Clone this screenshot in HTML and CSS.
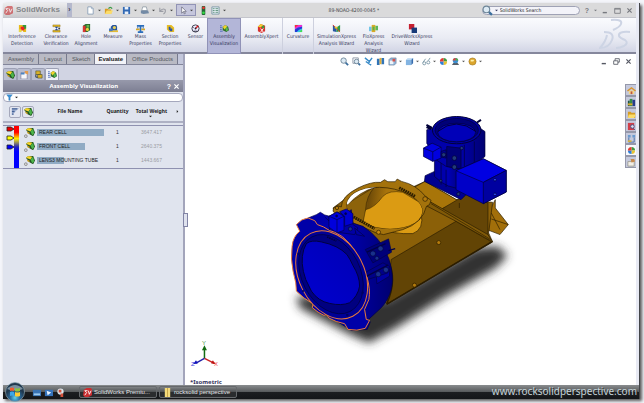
FILE: index.html
```html
<!DOCTYPE html>
<html lang="en">
<head>
<meta charset="utf-8">
<title>SolidWorks</title>
<link rel="stylesheet" href="styles.css">
</head>
<body>
<svg class="defs" aria-hidden="true">
  <defs>
    <symbol id="part" viewBox="0 0 10 10"><path d="M0 3 3 1l5 0 2 5-2 4-4-2z" fill="#252"/><path d="M0 3 3 1l4 1-2 3z" fill="#f4d22c"/><path d="M5 5 8 2l1 5-2 2z" fill="#4cb54a"/><path d="M1 5l3 1v2L2 7z" fill="#c79b1c"/></symbol>
    <symbol id="interf" viewBox="0 0 10 10"><path d="M1 1h4l1 2 3-2v8H6L5 7 1 9z" fill="#e8bb1c"/><path d="M5 1h4v4L6 6z" fill="#2f9a3a"/><path d="M3 3h4v4H3z" fill="#e22"/><path d="M1 6h3v3H1z" fill="#e9d94a"/></symbol>
    <symbol id="clear" viewBox="0 0 10 10"><path d="M1 1h8v2H1zM1 7h8v2H1z" fill="#e5bb20" stroke="#8b6a10" stroke-width=".5"/><path d="M3 3h4L5 5zM3 7h4L5 5z" fill="#234a9c"/><path d="M7 4h2v2H7z" fill="#345"/></symbol>
    <symbol id="hole" viewBox="0 0 10 10"><path d="M1 2 4 0h5v7L6 9H1z" fill="#286b2e"/><path d="M1 2h3v7H1z" fill="#d33"/><path d="M5 1h3v3H5z" fill="#67b54c"/><circle cx="6" cy="6" r="1.700" fill="#f0d23d"/></symbol>
    <symbol id="measure" viewBox="0 0 10 10"><path d="M0 7h10v2H0z" fill="#e6bd31"/><path d="M2 7V3l2-2h4l1 2v4z" fill="#27549e"/><circle cx="6" cy="4" r="1.800" fill="#e6d05a"/><path d="M0 5h4v3H0z" fill="#497bbd"/></symbol>
    <symbol id="mass" viewBox="0 0 10 10"><path d="M1 1h8v2H1zM4 1h2v8H4zM2 8h6v2H2z" fill="#2a6dbb"/><path d="M0 5h4v2H0zM6 5h4v2H6z" fill="#d5a82a"/><path d="M2 3v2M8 3v2" stroke="#36a"/></symbol>
    <symbol id="section" viewBox="0 0 10 10"><path d="M1 1h5l3 3v5H4L1 6z" fill="#e7bd24"/><path d="M3 3h2v2h2v3H5L3 6z" fill="#2b54a2"/></symbol>
    <symbol id="sensor" viewBox="0 0 10 10"><circle cx="5" cy="5" r="4" fill="#eef" stroke="#334" stroke-width="1"/><path d="M5 5 8 2" stroke="#d22" stroke-width="1.500"/><path d="M3 8h4M2 4h1" stroke="#334"/><circle cx="5" cy="5" r="1" fill="#223"/></symbol>
    <symbol id="asmvis" viewBox="0 0 10 10"><path d="M0 2h2M0 4h2M0 6h2M0 8h3" stroke="#4a69b8"/><path d="M3 3 6 1l3 2 1 4-3 2-4-2z" fill="#2f6d30"/><path d="M3 3l3-2 2 2-3 3z" fill="#f0d22b"/><path d="M6 5l2-2 1 4-2 1z" fill="#57bb4e"/></symbol>
    <symbol id="axpert" viewBox="0 0 10 10"><path d="M1 3 4 0l5 2v6L5 10 1 8z" fill="#d8332f"/><path d="M1 3 4 0l3 1-3 3z" fill="#f1d431"/><path d="M5 3 8 1v4H6z" fill="#3ca23e"/><path d="m4 5 3 4M7 5 4 9" stroke="#fff"/></symbol>
    <symbol id="curv" viewBox="0 0 10 10"><path d="M1 1h8v8H1z" fill="#31c6e8"/><path d="M1 1h8v2Q4 3 1 6z" fill="#f22ad0"/><path d="M1 1h4L1 4z" fill="#e33"/><path d="M1 6Q4 3 9 3v2Q5 6 3 9H1z" fill="#2639d8"/><path d="M6 9Q7 7 9 6v3z" fill="#42e053"/></symbol>
    <symbol id="sim" viewBox="0 0 10 10"><path d="M1 1l4 3v5L1 8z" fill="#2755a3"/><path d="m9 1-4 3v5l4-1z" fill="#2d9947"/><path d="M1 1 9 9" stroke="#e63828"/><path d="M3 3h3v2H3z" fill="#f0ca32"/></symbol>
    <symbol id="flo" viewBox="0 0 10 10"><path d="M0 3h3v5H0z" fill="#72c5e8"/><path d="M7 2h3v5H7z" fill="#5bb85c"/><path d="M3 1h4v8H3z" fill="#d9ab29"/><path d="M4 3h2v4H4z" fill="#55b74c"/></symbol>
    <symbol id="drive" viewBox="0 0 10 10"><path d="M1 0h6v6H1z" fill="#c51f30"/><path d="M4 4h6v6H4z" fill="#173a78"/></symbol>
    <symbol id="ball" viewBox="0 0 10 10"><path d="M5 5V1a4 4 0 0 1 4 4z" fill="#3f9b42"/><path d="M5 5h4a4 4 0 0 1-4 4z" fill="#e9c332"/><path d="M5 5v4a4 4 0 0 1-4-4z" fill="#2b7fda"/><path d="M5 5H1a4 4 0 0 1 4-4z" fill="#e23b32"/></symbol>
    <symbol id="lens" viewBox="0 0 10 10"><path d="m6 6 3 3" stroke="#3b6f9e" stroke-width="2"/><circle cx="4" cy="4" r="3" fill="#dceaf4" stroke="#6e8698"/></symbol>
    <symbol id="cube" viewBox="0 0 10 10"><path d="M1 3 3 1h6L7 3z" fill="#c6dff6"/><path d="M1 3h6v6H1z" fill="#83b4e2"/><path d="M7 3l2-2v6L7 9z" fill="#376daf"/></symbol>
    <symbol id="folder" viewBox="0 0 10 10"><path d="M1 2h3l1 1h4v6H1z" fill="#d79d25"/><path d="M2 5h8L8 9H1z" fill="#fbdc6a"/></symbol>
    <symbol id="page" viewBox="0 0 10 10"><path d="M2 1h4l2 2v6H2z" fill="#fff" stroke="#7891ae" stroke-width=".8"/><path d="M6 1v2h2" fill="none" stroke="#7891ae" stroke-width=".6"/></symbol>
    <symbol id="sw" viewBox="0 0 10 10"><path d="M1 2 4 0h5l1 2v6L6 10H2L0 8z" fill="#c92d30"/><path d="M5 3H2l2 2-2 3M6 3l1 4 2-4" fill="none" stroke="#fff"/></symbol>
    <symbol id="win" viewBox="0 0 10 10"><path d="M1 8h6" stroke="currentColor" stroke-width="2"/></symbol>
    <symbol id="close" viewBox="0 0 10 10"><path d="m2 2 6 6M8 2 2 8" stroke="currentColor" stroke-width="1.700"/></symbol>
    <symbol id="max" viewBox="0 0 10 10"><path d="M1 2h8v7H1zM1 3h8" fill="none" stroke="currentColor" stroke-width="1.200"/></symbol>
    <symbol id="restore" viewBox="0 0 10 10"><path d="M3 4V1h6v5H7M1 4h6v5H1z" fill="none" stroke="currentColor" stroke-width="1.200"/></symbol>
    <symbol id="caret" viewBox="0 0 4 4"><path d="M0 1h4L2 3z" fill="currentColor"/></symbol>
  </defs>
</svg>

<div class="window">
  <header class="titlebar">
    <div class="brand"><svg class="ico"><use href="#sw"/></svg><b>SolidWorks</b><i class="flyout">›</i></div>
    <div class="quick">
      <button aria-label="New"><svg class="ico"><use href="#page"/></svg><svg class="car"><use href="#caret"/></svg></button>
      <button aria-label="Open"><svg class="ico" viewBox="0 0 10 10"><path d="M1 3h3l1 1h3v5H1z" fill="#d79d25"/><path d="M3 5h7L8 9H1z" fill="#fbdc6a"/><path d="M5 3q2-3 4 0" fill="none" stroke="#3a9a44" stroke-width="1.500"/></svg><svg class="car"><use href="#caret"/></svg></button>
      <button aria-label="Save"><svg class="ico" viewBox="0 0 10 10"><path d="M1 1h8v8H1z" fill="#3269b4"/><path d="M3 1h4v3H3zM3 6h4v3H3z" fill="#e9f1fb"/></svg><svg class="car"><use href="#caret"/></svg></button>
      <button aria-label="Print"><svg class="ico" viewBox="0 0 10 10"><path d="M3 1h4l1 4H2z" fill="#fff" stroke="#678" stroke-width=".6"/><path d="M1 5h8l1 3-6 1-3-1z" fill="#738aa5"/></svg><svg class="car"><use href="#caret"/></svg></button>
      <button aria-label="Undo"><svg class="ico" viewBox="0 0 10 10"><path d="M2 2v4h4M2 6q3-4 6-2 1 3-2 5" fill="none" stroke="#9b9da5" stroke-width="1.200"/></svg><svg class="car"><use href="#caret"/></svg></button>
      <button class="picked" aria-label="Select"><svg class="ico" viewBox="0 0 10 10"><path d="M3 1v7l2-2 1 3 1-1-1-2h2z" fill="#fff" stroke="#556" stroke-width=".7"/></svg><svg class="car"><use href="#caret"/></svg></button>
      <button aria-label="Rebuild"><svg class="ico" viewBox="0 0 10 10"><rect x="3" width="4" height="10" rx="1" fill="#263"/><circle cx="5" cy="2" r="1.500" fill="#e33"/><circle cx="5" cy="7.500" r="1.500" fill="#3d4"/></svg></button>
      <button aria-label="Options"><svg class="ico" viewBox="0 0 10 10"><path d="M1 1h8v8H1z" fill="#e7f0f5" stroke="#7b97a5"/><path d="M2 3h2M5 3h3M2 5h2M5 5h3M2 7h2M5 7h3" stroke="#5a8e7b"/></svg><svg class="car"><use href="#caret"/></svg></button>
    </div>
    <div class="doc">89-NOAO-4200-0045 *</div>
    <label class="search"><svg class="lens"><use href="#lens"/></svg><svg class="car"><use href="#caret"/></svg><input type="text" value="SolidWorks Search" aria-label="Search"></label>
    <div class="winbtns">
      <button aria-label="Help"><b>?</b></button><svg class="car"><use href="#caret"/></svg>
      <button aria-label="Minimize"><svg class="wi"><use href="#win"/></svg></button>
      <button aria-label="Maximize"><svg class="wi"><use href="#max"/></svg></button>
      <button aria-label="Close"><svg class="wi"><use href="#close"/></svg></button>
    </div>
  </header>

  <nav class="ribbon" aria-label="Evaluate tools">
    <button><svg class="ico"><use href="#interf"/></svg>Interference<br>Detection</button>
    <button><svg class="ico"><use href="#clear"/></svg>Clearance<br>Verification</button>
    <button><svg class="ico"><use href="#hole"/></svg>Hole<br>Alignment</button>
    <button><svg class="ico"><use href="#measure"/></svg>Measure</button>
    <button><svg class="ico"><use href="#mass"/></svg>Mass<br>Properties</button>
    <button><svg class="ico"><use href="#section"/></svg>Section<br>Properties</button>
    <button><svg class="ico"><use href="#sensor"/></svg>Sensor</button>
    <button class="active"><svg class="ico"><use href="#asmvis"/></svg>Assembly<br>Visualization</button>
    <button class="ruled"><svg class="ico"><use href="#axpert"/></svg>AssemblyXpert</button>
    <button class="ruled"><svg class="ico"><use href="#curv"/></svg>Curvature</button>
    <button><svg class="ico"><use href="#sim"/></svg>SimulationXpress<br>Analysis Wizard</button>
    <button><svg class="ico"><use href="#flo"/></svg>FloXpress<br>Analysis<br>Wizard</button>
    <button><svg class="ico"><use href="#drive"/></svg>DriveWorksXpress<br>Wizard</button>
    <svg class="ds" viewBox="0 0 32 32"><g fill="none" stroke="#cdd4e4" stroke-width="2"><path d="M12 2q12-1 10 4-1 3-8 6"/><path d="M5 14q11 0 8 8-3 8-12 8 6-7 7-13"/><path d="M31 14q-12-1-11 4 1 2 6 4 4 3-1 6-4 2-8 2"/></g></svg>
  </nav>

  <main class="work">
    <aside class="side">
      <div class="cmdtabs">
        <button>Assembly</button><button>Layout</button><button>Sketch</button><button class="on">Evaluate</button><button>Office Products</button>
      </div>
      <div class="paneltabs">
        <button aria-label="Feature tree"><svg class="ico"><use href="#part"/></svg></button>
        <button aria-label="Properties"><svg class="ico" viewBox="0 0 10 10"><path d="M1 3h7v7H1z" fill="#f6f6fa" stroke="#779" stroke-width=".7"/><path d="M5 1h4v4L6 4z" fill="#e39a4e"/><path d="M1 3h4v2H1z" fill="#4b85c4"/></svg></button>
        <button aria-label="Configurations"><svg class="ico" viewBox="0 0 10 10"><path d="M2 1h5v4H2zM4 5h5v4H4z" fill="#d8b126" stroke="#553" stroke-width=".7"/><path d="M2 5v3h2" stroke="#234" fill="none"/></svg></button>
        <button class="on" aria-label="Assembly Visualization"><svg class="ico"><use href="#asmvis"/></svg></button>
      </div>
      <div class="panelhead"><h1>Assembly Visualization</h1><button aria-label="Help">?</button><button aria-label="Close"><svg class="wi"><use href="#close"/></svg></button></div>
      <div class="filter"><svg class="ico" viewBox="0 0 10 10"><path d="M1 1h8L6 5v4H4V5z" fill="#3b94d8" stroke="#1e64a8" stroke-width=".5"/></svg><svg class="car"><use href="#caret"/></svg></div>
      <table class="parts">
        <colgroup><col class="c-key"><col class="c-ico"><col><col class="c-qty"><col class="c-wt"><col class="c-more"></colgroup>
        <thead>
          <tr>
            <th colspan="2"><div class="views"><button aria-label="Flat view"><svg class="ico" viewBox="0 0 10 10"><path d="M1 1h8L1 9z" fill="#a8b8d6"/><path d="M1 2h6M1 5h3M1 8h2" stroke="#456296" stroke-width="1.400"/></svg></button><button aria-label="Nested view"><svg class="ico"><use href="#part"/></svg></button></div></th>
            <th>File Name</th><th>Quantity</th><th class="sorted">Total Weight<svg class="car"><use href="#caret"/></svg></th><th><svg class="car more"><use href="#caret"/></svg></th>
          </tr>
        </thead>
        <tbody>
          <tr>
            <td rowspan="3" class="key"><svg viewBox="0 0 18 42"><defs><linearGradient id="scale" x2="0" y2="1"><stop offset=".15" stop-color="#f00"/><stop offset=".3" stop-color="#fe0"/><stop offset=".5" stop-color="#22b"/><stop offset=".6" stop-color="#00f"/></linearGradient></defs><path d="M11 0h5v42h-5z" fill="url(#scale)"/><g stroke="#222" stroke-width=".8"><path d="M4 1h4l3 2-3 2H4z" fill="#e00"/><path d="M4 10h4l3 2-3 2H4z" fill="#ff0"/><path d="M4 19h4l3 2-3 2H4z" fill="#00f"/></g></svg></td>
            <td><svg class="row-ico" viewBox="0 0 12 12"><use href="#part" x="2" width="10" height="10"/><circle cx="2" cy="10" r="1.500" fill="#ddd" stroke="#777" stroke-width=".8"/></svg></td><td><div class="name"><span class="bar" style="width:100%"></span>REAR CELL</div></td><td class="n">1</td><td class="w">3647.417</td><td></td>
          </tr>
          <tr><td><svg class="row-ico" viewBox="0 0 12 12"><use href="#part" x="2" width="10" height="10"/><circle cx="2" cy="10" r="1.500" fill="#ddd" stroke="#777" stroke-width=".8"/></svg></td><td><div class="name"><span class="bar" style="width:72%"></span>FRONT CELL</div></td><td class="n">1</td><td class="w">2640.375</td><td></td></tr>
          <tr><td><svg class="row-ico" viewBox="0 0 12 12"><use href="#part" x="2" width="10" height="10"/><circle cx="2" cy="10" r="1.500" fill="#ddd" stroke="#777" stroke-width=".8"/></svg></td><td><div class="name"><span class="bar" style="width:40%"></span>LENS3 MOUNTING TUBE</div></td><td class="n">1</td><td class="w">1443.667</td><td></td></tr>
        </tbody>
      </table>
    </aside>
    <div class="splitter"><i></i></div>

    <section class="view" aria-label="Model view">
      <svg class="model" viewBox="185 54 452 331" preserveAspectRatio="xMinYMin meet">
        <defs>
          <filter id="soft" x="-20%" y="-20%" width="140%" height="140%"><feGaussianBlur stdDeviation="14"/></filter>
          <linearGradient id="face" x1="0" y1="1" x2="1" y2="0"><stop stop-color="#0000d0"/><stop offset="1" stop-color="#0000b4"/></linearGradient>
          <linearGradient id="cyl"><stop stop-color="#0000a0"/><stop offset=".5" stop-color="#0000b4"/><stop offset="1" stop-color="#000070"/></linearGradient>
          <linearGradient id="bore"><stop stop-color="#d6970f"/><stop offset=".28" stop-color="#6f4b08"/><stop offset=".5" stop-color="#a8740c"/></linearGradient>
          <clipPath id="hole-clip"><ellipse cx="315" cy="325" rx="114" ry="61" transform="rotate(7 315 325)"/></clipPath>
        </defs>
        <g transform="translate(280 100) scale(.3333)" stroke-linejoin="round">
          <path d="M50 590 320 600 590 445 655 440 685 468 650 505 500 590 350 685 268 730 210 705 60 625z" fill="#333" filter="url(#soft)"/>
          <g stroke="#2b1d00" stroke-width="2">
            <path d="M632 330 648 300V325L687 375 662 405 628 392z" fill="#a26f0a"/>
            <path d="M636 358 687 375M636 340 662 390" fill="none"/>
            <path d="M437 245 530 300 640 308 628 400 640 427 322 615 200 400 160 325 200 295 300 250 400 262z" fill="#8b6008"/>
            <path d="M400 265 437 245 540 305 487 328 440 300z" fill="#a87509"/>
            <path d="M487 328 560 285 626 310V405L630 415z" fill="#644506"/>
            <path d="M335 480 530 365 637 427 322 614z" fill="#624405"/>
            <path d="M440 318 530 365 640 427 626 405 450 305z" fill="#805907"/>
            <path d="M455 312 634 420M540 325V310" fill="none"/>
            <path d="M425 340Q435 390 400 402 340 405 300 385L420 360z" fill="#db9b13"/>
            <path d="M322 614 637 427" stroke-width="4"/>
            <path d="M162 325 172 318 185 322Q185 290 235 265 275 245 303 248L315 240 325 246 347 246 353 238 366 245Q410 255 438 290L455 302 450 315 441 320Q430 370 370 390L312 405 290 400 175 350 160 335z" fill="#a3720c"/>
            <ellipse cx="315" cy="325" rx="114" ry="61" transform="rotate(7 315 325)" fill="url(#bore)"/>
            <g clip-path="url(#hole-clip)" stroke-width="1.500">
              <path d="M250 345 258 330Q285 325 310 290 330 270 370 278L440 320 425 400 250 385z" fill="#db9b13"/>
              <path d="M190 320 285 262Q260 290 258 330L250 370 190 360z" fill="#8d630a"/>
              <path d="M195 315Q225 255 290 262 240 275 205 315z" fill="#fff"/>
            </g>
            <path d="M359 264 407 290M222 352 285 387" stroke-width="9" stroke-dasharray="5 2"/>
            <circle cx="478" cy="429" r="6" fill="#b57b0b"/><circle cx="405" cy="557" r="6" fill="#b57b0b"/>
            <circle cx="172" cy="325" r="5" fill="#b57b0b"/><circle cx="297" cy="398" r="6" fill="#c9890c"/><circle cx="437" cy="298" r="7" fill="#b57b0b"/>
            <path d="M325 480Q355 540 322 612" fill="none" stroke-width="4"/>
          </g>

          <g stroke="#000038" stroke-width="2">
            <path d="M437 228 465 215 530 250 560 285 545 300 435 245z" fill="#000090"/>
            <path d="M465 160H550V265Q505 270 465 230z" fill="url(#cyl)"/>
            <path d="M485 180V255M500 210V262" fill="none"/>
            <path d="M442 90 460 85 602 85 617 95V170L585 195 545 208 500 200 470 180 442 130z" fill="url(#cyl)"/>
            <path d="M502 140 545 145V208L502 200zM555 135V200M585 125V190" fill="#000078"/>
            <ellipse cx="532" cy="91" rx="73" ry="41" fill="#0000a0" stroke-width="3"/>
            <ellipse cx="532" cy="91" rx="65" ry="35" fill="#000078"/>
            <ellipse cx="532" cy="98" rx="57" ry="28" fill="#0000b8"/>
            <path d="M475 95Q530 50 590 95" fill="none" stroke-width="3"/>
            <path d="M441 75 458 84M593 68 605 60M441 82 455 88" stroke-width="6"/>
            <path d="M432 145 458 130 485 142V175L460 185 432 170z" fill="#0000e0"/>
            <path d="M432 145 460 156 485 142M460 156V185" fill="none"/>
            <path d="M485 155 500 150V175L485 172z" fill="#000090"/>
            <g fill="#223a78"><circle cx="525" cy="175" r="7"/><circle cx="525" cy="202" r="7"/><circle cx="493" cy="165" r="6"/><circle cx="547" cy="145" r="5"/><circle cx="484" cy="243" r="4"/><circle cx="537" cy="283" r="5"/></g>
            <path d="M530 213 612 177 681 212V277L612 312 530 270z" fill="#0000c8"/>
            <path d="M530 213 612 177 681 212 612 248z" fill="#0000e2"/>
            <path d="M612 248 681 212V277L612 312z" fill="#0000a0"/>
            <circle cx="647" cy="240" r="4" fill="#3048ff"/><circle cx="647" cy="284" r="4" fill="#3048ff"/>
          </g>

          <g stroke="#000045" stroke-width="2">
            <path d="M85 355 110 345 122 338 135 346 150 350 250 380Q305 415 328 478 345 530 335 570 325 605 305 625L267 660 272 668 263 690 215 693 100 620 38 500 45 425z" fill="url(#cyl)"/>
            <path d="M135 352 160 375 240 400 225 385" fill="none"/>
            <path d="M148 350 172 337 195 345 215 330 220 375 235 385 225 405 150 395z" fill="#0000a4"/>
            <path d="M148 350 172 337 193 350V392L172 400 148 383z" fill="#0000dc"/><path d="M148 350 172 360 193 350M172 360V400" fill="none"/>
            <path d="M180 336 200 328 220 342V372L195 380V350z" fill="#0000d2"/>
            <circle cx="171" cy="349" r="3" fill="#000050"/><circle cx="198" cy="342" r="3" fill="#000050"/>
            <path d="M225 385 255 410 230 405zM290 525 330 510V530L292 553z" fill="#0000a2"/>
            <path d="M257 450 327 418 336 458 280 490z" fill="#000078"/>
            <path d="M255 520 310 490 330 500 325 520 265 540z" fill="#000088"/>
            <path d="M327 453 347 447M262 458 318 432M262 530 325 497" stroke-width="4"/>
            <g fill="#18308a"><circle cx="280" cy="462" r="8"/><circle cx="303" cy="447" r="8"/><circle cx="296" cy="524" r="8"/><circle cx="319" cy="511" r="8"/><circle cx="292" cy="476" r="6"/><circle cx="212" cy="388" r="6"/></g>
          </g>
          <path d="M50 375Q65 357 85 355L105 363 113 375Q132 380 150 393L165 398Q190 408 210 432 235 462 248 500L248 520 262 532Q273 570 268 600L255 630 260 660 270 663 257 687Q232 696 205 690L195 673Q168 668 148 656L140 645 133 648Q115 640 98 625L100 613Q72 598 50 575L48 550 40 515Q32 480 37 440 40 410 60 395z" fill="#0000a8" stroke="#e87a3a" stroke-width="3"/>
          <ellipse cx="156" cy="526" rx="98" ry="140" transform="rotate(-27 156 526)" fill="#000096" stroke="#e87a3a" stroke-width="3"/>
          <ellipse cx="154" cy="524" rx="88" ry="126" transform="rotate(-27 154 524)" fill="#000080" stroke="#000040" stroke-width="2"/>
          <path d="M80 432Q95 420 125 427 175 437 202 465 212 480 220 498 240 530 240 560 235 590 210 610 185 620 150 612 115 605 95 575L78 540Q60 490 72 450z" fill="url(#face)" stroke="#000040" stroke-width="3"/>
          <path d="M142 412 170 424" stroke="#000040" stroke-width="5" stroke-dasharray="5 2"/>
          <g fill="#000060"><circle cx="57" cy="463" r="4"/><circle cx="203" cy="647" r="4"/><circle cx="249" cy="580" r="4"/><circle cx="70" cy="575" r="3"/></g>
        </g>
        <g fill="none" stroke-width="1.500">
          <path d="M204.500 359v-10" stroke="#126b12"/><path d="m204.500 359 10 5" stroke="#c22"/><path d="m204.500 359-9 5" stroke="#22a"/>
        </g>
        <path d="m202 351 2.500-5 2.500 5z" fill="#126b12"/><path d="m211 364 4.500 1-2.500-4z" fill="#b11"/><path d="m198 364-5 1 3-4z" fill="#11b"/>
        <g class="axis"><text x="202" y="346" fill="#4a9a4a">Y</text><text x="214" y="367" fill="#e44">X</text><text x="191" y="367" fill="#44d">Z</text></g>
        <text x="190" y="385" class="orient">*Isometric</text>
      </svg>
      <div class="hud">
        <button aria-label="Zoom to fit"><svg class="ico"><use href="#lens"/></svg></button>
        <button aria-label="Zoom to area"><svg class="ico" viewBox="0 0 10 10"><path d="M1 1h6v6H1z" fill="none" stroke="#8b95a5"/><path d="m7 7 2 2" stroke="#3b6f9e" stroke-width="2"/><circle cx="5" cy="5" r="2.500" fill="#dceaf4" stroke="#6e8698"/></svg></button>
        <button aria-label="Previous view"><svg class="ico" viewBox="0 0 10 10"><path d="M1 1l5 4 3-4M2 5l6 4M6 5l-1 3" stroke="#398bc8" stroke-width="1.600" fill="none"/></svg></button>
        <button aria-label="Section view"><svg class="ico" viewBox="0 0 10 10"><path d="M1 2h3v7H1zM6 1h3v7H6z" fill="#3174b8"/><path d="M4 1h2v7H4z" fill="#e3ae35"/></svg></button>
        <button aria-label="View orientation"><svg class="ico" viewBox="0 0 10 10"><path d="M1 3 3 1h6v6L7 9H1z" fill="#8fb4d8" stroke="#57728f" stroke-width=".6"/><path d="M2 4h4v4H2z" fill="#eef4fa"/><path d="M5 2h3v3H5z" fill="#d8534a"/></svg><svg class="car"><use href="#caret"/></svg></button>
        <button aria-label="Display style"><svg class="ico"><use href="#cube"/></svg><svg class="car"><use href="#caret"/></svg></button>
        <button aria-label="Hide or show"><svg class="ico" viewBox="0 0 10 10"><g fill="none" stroke="#7895a5"><circle cx="2.500" cy="7" r="1.700"/><circle cx="7" cy="6" r="1.700"/><path d="M1 6 4 2M7 4l2-3"/></g></svg><svg class="car"><use href="#caret"/></svg></button>
        <button aria-label="Appearance"><svg class="ico"><use href="#ball"/></svg></button>
        <button aria-label="Scene"><svg class="ico" viewBox="0 0 10 10"><path d="M1 9 3 6h4l2 3z" fill="#56606a"/><circle cx="5" cy="4" r="3" fill="#3c90d5"/><path d="M5 1a3 3 0 0 1 3 3H5z" fill="#58aa45"/><path d="M2 4a3 3 0 0 1 3-3v3z" fill="#df4439"/></svg><svg class="car"><use href="#caret"/></svg></button>
        <button aria-label="View settings"><svg class="ico" viewBox="0 0 10 10"><circle cx="5" cy="5" r="4" fill="#dba52c" stroke="#9b721c" stroke-width=".6"/><path d="M3 3h4l-1 2H3z" fill="#fff0a5"/></svg><svg class="car"><use href="#caret"/></svg></button>
      </div>
      <div class="mdi">
        <button aria-label="Minimize document"><svg class="wi"><use href="#win"/></svg></button>
        <button aria-label="Restore document"><svg class="wi"><use href="#restore"/></svg></button>
        <button aria-label="Close document"><svg class="wi"><use href="#close"/></svg></button>
      </div>
      <div class="taskpane">
        <button aria-label="Resources"><svg class="ico" viewBox="0 0 10 10"><path d="M2 5h6v4H2z" fill="#f5d789"/><path d="M0 5 5 1l5 4-1 1-4-3-4 3z" fill="#d9942d"/><path d="M4 6h2v3H4z" fill="#b54"/></svg></button>
        <button aria-label="Design library"><svg class="ico" viewBox="0 0 10 10"><path d="M1 3h2v6H1z" fill="#254"/><path d="M3 1h3v8H3z" fill="#368b48"/><path d="M6 2h3v7H6z" fill="#263b8b"/><path d="M1 6h5v2H1z" fill="#d8aa27"/></svg></button>
        <button aria-label="File explorer"><svg class="ico"><use href="#folder"/></svg></button>
        <button aria-label="Search"><svg class="ico" viewBox="0 0 10 10"><path d="M1 1h7v8H1z" fill="#d13e48"/><circle cx="6" cy="5" r="2" fill="#dde" stroke="#458"/><path d="m7 7 2 2" stroke="#458"/></svg></button>
        <button aria-label="View palette"><svg class="ico" viewBox="0 0 10 10"><path d="M1 1h3v3H1zM6 1h3v3H6z" fill="#6a9bd0"/><path d="M2 4v5h6V4" stroke="#456ca5" fill="none"/><path d="M1 7h4v2H1z" fill="#d4b241"/></svg></button>
        <button class="on" aria-label="Appearances"><svg class="ico"><use href="#ball"/></svg></button>
        <button aria-label="Custom properties"><svg class="ico" viewBox="0 0 10 10"><path d="M1 4h7v5H1z" fill="#f2eee6" stroke="#887" stroke-width=".7"/><path d="M4 1h4l1 3-4 1z" fill="#c8894c"/></svg></button>
      </div>
    </section>
  </main>

  <footer class="taskbar">
    <button class="start" aria-label="Start"><svg viewBox="0 0 20 20"><defs><radialGradient id="orb" cy=".8"><stop stop-color="#5fd2ee"/><stop offset=".5" stop-color="#2a6a9c"/><stop offset="1" stop-color="#20384e"/></radialGradient></defs><circle cx="10" cy="10" r="9.500" fill="url(#orb)" stroke="#8ba3b0" stroke-width=".7"/><path d="M2 7Q10-1 18 7 10 10 2 7z" fill="#b5c9d5" opacity=".6"/><path d="M5 6q2-1 4 0v3q-2-1-4 0z" fill="#ed5b2d"/><path d="M10 6q2 1 5 0v3q-3 1-5 0z" fill="#8ac53e"/><path d="M5 10q2-1 4 0v4q-2-1-4 0z" fill="#3ba6e8"/><path d="M10 10q2 1 5 0v4q-3 1-5 0z" fill="#fccb34"/></svg></button>
    <div class="launch">
      <button aria-label="Show desktop"><svg class="ico" viewBox="0 0 10 10"><path d="M1 2h9v7H1z" fill="#3973b4"/><path d="M2 6h7v2H2z" fill="#9bc9ef"/></svg></button>
      <button aria-label="Switch windows"><svg class="ico" viewBox="0 0 10 10"><path d="M1 2h9v7H1z" fill="#3573bc"/><path d="M3 3l5 2-4 3z" fill="#e8f3ff"/></svg></button>
      <button aria-label="Viewer"><svg class="ico" viewBox="0 0 10 10"><circle cx="5" cy="4" r="3.500" fill="#d9e7ee"/><path d="M3 2h3v3H3zM5 6h3v4H5z" fill="#d6513a"/></svg></button>
    </div>
    <button class="task"><svg class="ico"><use href="#sw"/></svg>SolidWorks Premiu...</button>
    <button class="task"><svg class="ico" viewBox="0 0 10 10"><path d="M2 0h6v10H2z" fill="#f4db7b"/><path d="M5 0v10" stroke="#c6a144"/></svg>rocksolid perspective</button>
    <a class="credit" href="#">www.rocksolidperspective.com</a>
  </footer>
</div>
</body>
</html>
```
FILE: styles.css
```css
* { box-sizing: border-box; }
html, body { height: 100%; }
body {
  margin: 0;
  padding: 3px 4px 4px 3px;
  background: #f4f5fa;
  font: 5px/7px "DejaVu Sans Condensed", "Noto Sans", sans-serif;
  color: #34375c;
  overflow: hidden;
}
button {
  display: flex;
  align-items: center;
  justify-content: center;
  padding: 0;
  margin: 0;
  border: 0;
  background: none;
  font: inherit;
  color: inherit;
}
svg { display: block; flex: none; }
.defs { position: absolute; width: 0; height: 0; }
.ico { width: 9px; height: 9px; }
.car { width: 3px; height: 3px; }
.wi { width: 7px; height: 7px; }

.window {
  display: flex;
  flex-direction: column;
  height: 100%;
  background: #e8eaf4;
  padding-right: 3px;
  border-right: 1px solid #44464a;
  box-shadow: 2px 2px 3px #555;
}

/* Title bar */
.titlebar {
  display: flex;
  align-items: center;
  height: 15px;
  flex: none;
  background: #dadadb;
  border-bottom: 1px solid #c4c5cc;
}
.brand {
  display: flex;
  align-items: center;
  gap: 3px;
  width: 69px;
  height: 14px;
  padding-left: 1px;
  background: linear-gradient(#ececee, #c9c9cc);
  font: bold 8px/10px "Liberation Sans", sans-serif;
  color: #85878b;
}
.brand .ico { opacity: .6; }
.flyout {
  margin-left: auto;
  width: 5px;
  height: 14px;
  background: #b5b8cc;
  color: #445;
  font: bold 7px/13px "Liberation Sans", sans-serif;
  text-align: center;
}
.quick {
  display: flex;
  align-items: center;
  gap: 3px;
  margin-left: 14px;
  color: #444;
}
.quick button { gap: 3px; height: 12px; }
.quick .picked { border: 1px solid #9193b5; background: #c5c6dc; gap: 2px; padding: 0 2px; }
.doc { flex: 1; text-align: center; color: #44454a; }
.search {
  display: flex;
  align-items: center;
  gap: 2px;
  width: 98px;
  height: 9px;
  margin-right: 5px;
  border: 1px solid #9fa2b5;
  border-radius: 5px;
  background: #f3f3f9;
}
.search .lens { width: 11px; height: 11px; margin-left: -1px; }
.search input {
  min-width: 0;
  flex: 1;
  height: 7px;
  padding: 0;
  border: 0;
  background: none;
  font: inherit;
  color: #222;
}
.winbtns { display: flex; align-items: center; gap: 5px; margin-right: 3px; color: #77797f; }
.winbtns b { font: bold 7px/9px "Liberation Sans", sans-serif; }

/* Ribbon */
.ribbon {
  display: grid;
  grid-template-columns: 38px 30px 30px 24px 31px 28px 23px 34px 42px 31px 45px 29px 48px 1fr;
  height: 36px;
  flex: none;
  background: linear-gradient(#fafbfe, #e9ebf3 60%, #d2d5e5);
  border-bottom: 2px solid #85879c;
}
.ribbon button {
  flex-direction: column;
  justify-content: flex-start;
  padding-top: 6px;
  white-space: nowrap;
}
.ribbon .active { background: #b3b6d8; border: 1px solid #9092b7; padding-top: 5px; }
.ribbon .ruled { border-right: 1px solid #cdd0de; }
.ds { width: 32px; height: 32px; justify-self: end; margin-right: 5px; }

/* Work area */
.work { display: flex; flex: 1; min-height: 0; }
.side { width: 180px; flex: none; background: #e0e4ee; }
.cmdtabs {
  display: flex;
  height: 11px;
  background: #c3c7db;
  border-bottom: 1px solid #83869b;
  font: 6px/8px "Liberation Sans", sans-serif;
}
.cmdtabs button { padding: 0 4px 0 5px; background: #b9bac4; border-right: 1px solid #777a8d; color: #55585e; }
.cmdtabs .on { background: #f2f3f8; color: #222; font-weight: bold; padding: 0 3px; }
.paneltabs { display: flex; height: 15px; padding-top: 3px; background: #d1d4e3; }
.paneltabs button { width: 14px; border: 1px solid #9ca0b4; border-bottom: 0; border-radius: 2px 2px 0 0; background: #b9bdd0; }
.paneltabs .on { background: #eff1f8; }
.panelhead {
  display: flex;
  align-items: center;
  gap: 2px;
  height: 12px;
  padding-right: 3px;
  background: linear-gradient(#9799ab, #7d7f93);
  color: #fff;
}
.panelhead h1 { flex: 1; margin: 0; text-align: center; font: bold 6px/8px "Noto Sans", sans-serif; }
.panelhead button { font: bold 7px/9px "Liberation Sans", sans-serif; }
.filter {
  display: flex;
  align-items: center;
  gap: 2px;
  height: 9px;
  margin-top: 1px;
  padding-left: 2px;
  background: #fff;
  border: 1px solid #a5a8bd;
  border-radius: 4px;
  color: #222;
}
.filter .ico { width: 7px; height: 7px; }

.parts { width: 100%; table-layout: fixed; border-collapse: collapse; border-bottom: 1px solid #8f91b0; font: 5px/7px "Liberation Sans", sans-serif; }
.c-key { width: 18px; }
.c-ico { width: 15px; }
.c-qty { width: 27px; }
.c-wt { width: 41px; }
.c-more { width: 11px; }
.parts th, .parts td { padding: 0; }
.parts th { height: 20px; border-bottom: 2px solid #aeb1c4; color: #222; font: bold 5px/7px "Noto Sans", sans-serif; }
.views { display: flex; gap: 1px; padding-left: 6px; }
.views button { width: 12px; height: 12px; border: 1px solid #a5a8bb; border-radius: 2px; background: #e3e6f0; }
.sorted { position: relative; }
.sorted .car { position: absolute; left: 18px; top: 13px; }
.more { margin: 0 auto; transform: rotate(-90deg); }
.parts tbody::before { content: ""; display: table-row; height: 3px; }
.parts tbody tr { height: 14px; }
.parts tbody tr:first-child td { border-top: 1px solid #8f91b0; }
.key svg { width: 18px; height: 42px; }
.row-ico { width: 11px; height: 11px; margin-left: 3px; }
.name { position: relative; z-index: 0; height: 7px; padding-left: 2px; margin-left: 1px; white-space: nowrap; color: #222; }
.bar { position: absolute; z-index: -1; left: 0; top: 0; height: 7px; background: #90abc4; }
.n { text-align: center; color: #333; }
.w { text-align: center; color: #9a9ca3; }

.splitter { width: 2px; flex: none; display: flex; align-items: center; background: #a3a5bb; }
.splitter i { z-index: 1; flex: none; width: 5px; height: 14px; border: 1px solid #8184a5; background: #dfe2ee; }

/* Model view */
.view { position: relative; flex: 1; min-width: 0; background: #fff; overflow: hidden; }
.model { width: 100%; height: auto; }
.axis { font: 6px "Liberation Sans", sans-serif; }
.orient { font: bold 6px "Noto Sans", sans-serif; fill: #34345c; }
.hud { position: absolute; top: 3px; left: 155px; display: flex; gap: 3px; color: #555; }
.hud button { gap: 2px; }
.mdi { position: absolute; top: 4px; right: 4px; display: flex; gap: 5px; color: #555863; }
.taskpane { position: absolute; top: 30px; right: 0; display: flex; flex-direction: column; width: 11px; }
.taskpane button { height: 12px; border: 1px solid #9598aa; border-right: 0; background: #c5c9dc; }
.taskpane .on { background: #f7f8fc; }

/* Taskbar */
.taskbar {
  position: relative;
  display: flex;
  align-items: center;
  height: 14px;
  flex: none;
  margin-right: -3px;
  background: linear-gradient(#8a8d8f, #55585a 50%, #1b1d20 52%, #141619);
  font: 6px/8px "Liberation Sans", sans-serif;
  color: #e5e6e8;
}
.start { width: 20px; height: 20px; margin-left: 2px; z-index: 1; }
.start svg { width: 20px; height: 20px; }
.launch { display: flex; gap: 3px; margin: 0 14px 0 7px; }
.task {
  width: 78px;
  height: 12px;
  justify-content: flex-start;
  gap: 2px;
  padding-left: 3px;
  margin-right: 2px;
  border: 1px solid #66696c;
  border-radius: 2px;
  background: linear-gradient(#808385, #4c4f51 50%, #2a2c2e 52%);
  white-space: nowrap;
}
.credit { margin: 0 2px 2px auto; font: 10px/12px "Noto Sans", sans-serif; color: #c3d2d8; text-decoration: none; text-shadow: 1px 1px #222; }
```
